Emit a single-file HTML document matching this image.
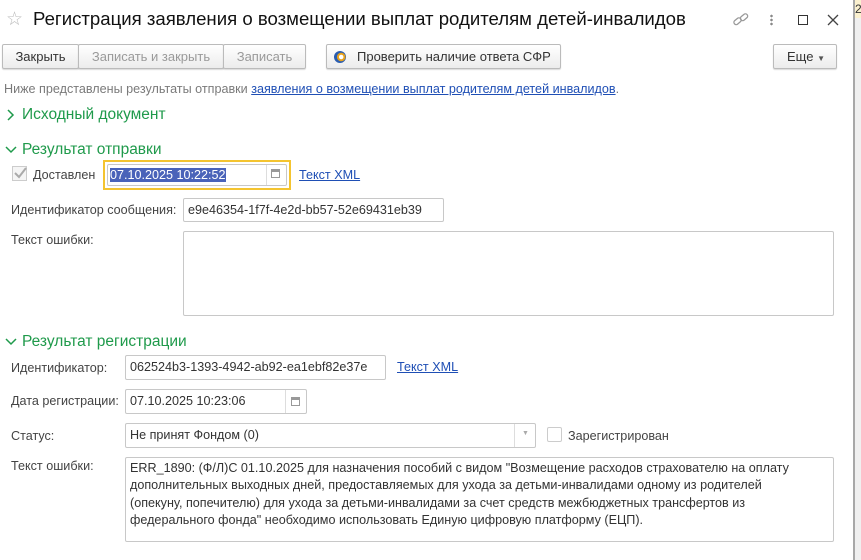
<!DOCTYPE html>
<html><head><meta charset="utf-8"><style>
*{box-sizing:border-box;margin:0;padding:0}
body{width:861px;height:560px;position:relative;background:#fff;font-family:"Liberation Sans",Arial,sans-serif;font-size:12.6px;color:#333;overflow:hidden}
.a{position:absolute;white-space:nowrap}
.btn{position:absolute;top:44px;height:25px;border:1px solid #bbb;background:linear-gradient(#fff,#ececec);border-radius:2px;line-height:23px;text-align:center;font-size:13px;color:#333;box-shadow:0 1px 1px rgba(0,0,0,.15)}
.dis{color:#9a9a9a}
.h{position:absolute;font-size:15.5px;color:#1f9a4b;white-space:nowrap}
.lbl{position:absolute;color:#444;font-size:12.6px;white-space:nowrap}
.fld{position:absolute;border:1px solid #c8c8c8;border-radius:2px;background:#fff;padding-left:4px;font-size:12.6px;color:#333;white-space:nowrap}
.lnk{position:absolute;color:#1f4fb5;text-decoration:underline;font-size:12.6px;white-space:nowrap}
.div{position:absolute;top:0;bottom:0;border-left:1px solid #ddd}
</style></head><body>
<div class="a" style="left:853px;top:0;width:8px;height:560px;background:#f0f0f0;border-left:2px solid #a8a8a8"></div>
<div class="a" style="left:855px;top:0;width:6px;height:18px;background:#fbf1cf;font-size:12px;line-height:18px;color:#333">2</div>

<div class="a" style="left:6px;top:8px;font-size:19px;color:#bbb">☆</div>
<div class="a" style="left:33px;top:8px;font-size:18.6px;color:#111">Регистрация заявления о возмещении выплат родителям детей-инвалидов</div>
<svg class="a" style="left:732px;top:12px" width="18" height="16" viewBox="0 0 18 16"><g fill="none" stroke="#999" stroke-width="1.3"><rect x="1.5" y="7" width="8" height="4.5" rx="2.2" transform="rotate(-40 5.5 9.2)"/><rect x="8" y="3" width="8" height="4.5" rx="2.2" transform="rotate(-40 12 5.2)"/></g></svg>
<div class="a" style="left:770px;top:14px;width:3px;height:12px;background:radial-gradient(circle,#888 1.2px,transparent 1.4px) 0 0/3px 4px"></div>
<div class="a" style="left:798px;top:15px;width:10px;height:10px;border:1.3px solid #333"></div>
<svg class="a" style="left:827px;top:14px" width="12" height="12"><path d="M1 1L11 11M11 1L1 11" stroke="#444" stroke-width="1.3"/></svg>

<div class="btn" style="left:2px;width:77px">Закрыть</div>
<div class="btn dis" style="left:78px;width:146px">Записать и закрыть</div>
<div class="btn dis" style="left:223px;width:83px">Записать</div>
<div class="btn" style="left:326px;width:235px;text-align:left;padding-left:30px">Проверить наличие ответа СФР</div>
<div class="a" style="left:334px;top:51px;width:12px;height:12px;border-radius:50%;background:radial-gradient(circle at 60% 50%,#fff 0 2px,#e8a21c 2.5px 4px,#2a5db0 4.5px)"></div>
<div class="btn" style="left:773px;width:64px;text-align:left;padding-left:13px">Еще <span style="font-size:8px;color:#555">▼</span></div>

<div class="a" style="left:4px;top:82px;color:#7a7a7a">Ниже представлены результаты отправки <span style="color:#1f4fb5;text-decoration:underline">заявления о возмещении выплат родителям детей инвалидов</span>.</div>

<svg class="a" style="left:7px;top:109px" width="8" height="12"><path d="M1 1l5 5-5 5" fill="none" stroke="#1f9a4b" stroke-width="1.5"/></svg>
<div class="h" style="left:22px;top:106px">Исходный документ</div>
<svg class="a" style="left:5px;top:146px" width="12" height="8"><path d="M1 1l5 5 5-5" fill="none" stroke="#1f9a4b" stroke-width="1.5"/></svg>
<div class="h" style="left:22px;top:141px">Результат отправки</div>

<div class="a" style="left:12px;top:166px;width:15px;height:15px;border:1px solid #ccc;background:#f5f5f5"></div>
<svg class="a" style="left:13px;top:166px" width="14" height="14"><path d="M2 7l4 4 7-9" fill="none" stroke="#aaa" stroke-width="2"/></svg>
<div class="lbl" style="left:33px;top:168px">Доставлен</div>
<div class="a" style="left:103px;top:160px;width:188px;height:30px;border:2px solid #f4c430"></div>
<div class="fld" style="left:107px;top:164px;width:180px;height:22px;padding-left:2px;line-height:20px"><span style="background:#4a63b9;color:#fff">07.10.2025 10:22:52</span><div class="div" style="left:158px"></div></div>
<div class="a" style="left:271px;top:169px;width:9px;height:9px;border:1px solid #999;border-top:3px solid #999"></div>
<div class="lnk" style="left:299px;top:168px">Текст XML</div>

<div class="lbl" style="left:11px;top:203px">Идентификатор сообщения:</div>
<div class="fld" style="left:183px;top:198px;width:261px;height:24px;line-height:22px">e9e46354-1f7f-4e2d-bb57-52e69431eb39</div>
<div class="lbl" style="left:11px;top:233px">Текст ошибки:</div>
<div class="fld" style="left:183px;top:231px;width:651px;height:85px"></div>

<svg class="a" style="left:5px;top:338px" width="12" height="8"><path d="M1 1l5 5 5-5" fill="none" stroke="#1f9a4b" stroke-width="1.5"/></svg>
<div class="h" style="left:22px;top:333px">Результат регистрации</div>

<div class="lbl" style="left:11px;top:361px">Идентификатор:</div>
<div class="fld" style="left:125px;top:355px;width:261px;height:25px;line-height:23px">062524b3-1393-4942-ab92-ea1ebf82e37e</div>
<div class="lnk" style="left:397px;top:360px">Текст XML</div>

<div class="lbl" style="left:11px;top:394px">Дата регистрации:</div>
<div class="fld" style="left:125px;top:389px;width:182px;height:25px;line-height:23px">07.10.2025 10:23:06<div class="div" style="left:159px"></div></div>
<div class="a" style="left:291px;top:397px;width:9px;height:9px;border:1px solid #999;border-top:3px solid #999"></div>

<div class="lbl" style="left:11px;top:429px">Статус:</div>
<div class="fld" style="left:125px;top:423px;width:411px;height:25px;line-height:23px">Не принят Фондом (0)<div class="div" style="left:388px"></div></div>
<div class="a" style="left:522px;top:430px;font-size:7px;color:#aaa">▼</div>
<div class="a" style="left:547px;top:427px;width:15px;height:15px;border:1px solid #ccc;border-radius:2px"></div>
<div class="lbl" style="left:568px;top:429px">Зарегистрирован</div>

<div class="lbl" style="left:11px;top:459px">Текст ошибки:</div>
<div class="fld" style="left:125px;top:457px;width:709px;height:85px;white-space:normal;line-height:17.3px;padding:2px 4px">ERR_1890: (Ф/Л)С 01.10.2025 для назначения пособий с видом "Возмещение расходов страхователю на оплату дополнительных выходных дней, предоставляемых для ухода за детьми-инвалидами одному из родителей<br>(опекуну, попечителю) для ухода за детьми-инвалидами за счет средств межбюджетных трансфертов из<br>федерального фонда" необходимо использовать Единую цифровую платформу (ЕЦП).</div>
</body></html>
